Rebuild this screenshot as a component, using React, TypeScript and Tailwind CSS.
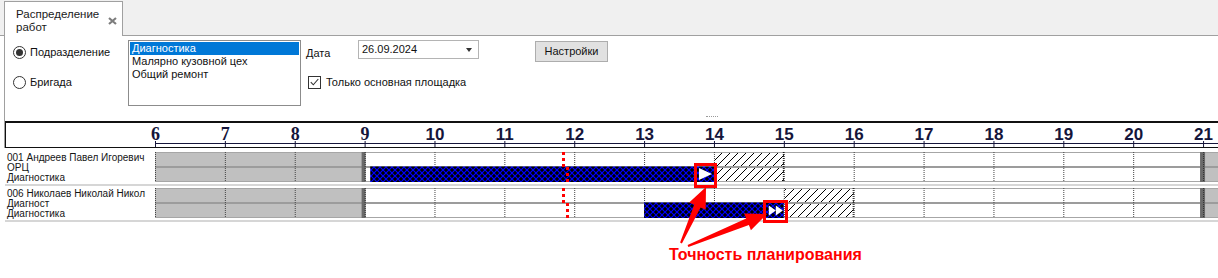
import React from "react";

const HOUR_W = 69.87;
const CHART_W = 1063;
const hx = (h: number) => (h - 6) * HOUR_W;
const HOURS = [6, 7, 8, 9, 10, 11, 12, 13, 14, 15, 16, 17, 18, 19, 20, 21];

interface GanttRow {
  lines: string[];
  barFrom: number;
  barTo: number;
  hatch: [number, number];
  marker: "single" | "double";
}

const rows: GanttRow[] = [
  {
    lines: ["001 Андреев Павел Игоревич", "ОРЦ", "Диагностика"],
    barFrom: 9.08,
    barTo: 14,
    hatch: [14, 15],
    marker: "single",
  },
  {
    lines: ["006 Николаев Николай Никол", "Диагност", "Диагностика"],
    barFrom: 13,
    barTo: 15,
    hatch: [15, 16],
    marker: "double",
  },
];

// tapered annotation arrow, tail -> tip
function arrow(x1: number, y1: number, x2: number, y2: number) {
  const tailW = 2, neckW = 7, headW = 18, headL = 21;
  const dx = x2 - x1, dy = y2 - y1;
  const len = Math.hypot(dx, dy);
  const ux = dx / len, uy = dy / len;
  const px = -uy, py = ux;
  const bx = x2 - ux * headL, by = y2 - uy * headL;
  const p = (x: number, y: number) => `${x.toFixed(1)},${y.toFixed(1)}`;
  return [
    p(x1 + (px * tailW) / 2, y1 + (py * tailW) / 2),
    p(bx + (px * neckW) / 2, by + (py * neckW) / 2),
    p(bx + (px * headW) / 2, by + (py * headW) / 2),
    p(x2, y2),
    p(bx - (px * headW) / 2, by - (py * headW) / 2),
    p(bx - (px * neckW) / 2, by - (py * neckW) / 2),
    p(x1 - (px * tailW) / 2, y1 - (py * tailW) / 2),
  ].join(" ");
}

function Radio({ label, checked }: { label: string; checked?: boolean }) {
  return (
    <div className="flex items-center h-[14px] gap-[4px]">
      <span className="w-[13px] h-[13px] rounded-full border border-[#333] bg-white flex items-center justify-center">
        {checked && <span className="w-[7px] h-[7px] rounded-full bg-[#333]" />}
      </span>
      <span>{label}</span>
    </div>
  );
}

function TimeScale() {
  return (
    <svg width={CHART_W} height={24} className="overflow-visible block">
      <line x1={0} y1={20.5} x2={CHART_W} y2={20.5} stroke="#15153a" strokeWidth={1} />
      {HOURS.map((h) => (
        <g key={h}>
          <line x1={hx(h) + 0.5} y1={18} x2={hx(h) + 0.5} y2={24} stroke="#15153a" strokeWidth={1} />
          <text
            x={hx(h) + 0.5}
            y={17}
            textAnchor="middle"
            fill="#15153a"
            fontWeight={700}
            fontSize={h < 10 ? 18 : 17}
            fontFamily={h < 10 ? "'Liberation Serif', serif" : "'Liberation Sans', sans-serif"}
          >
            {h}
          </text>
        </g>
      ))}
    </svg>
  );
}

function RowChart({ row, idx }: { row: GanttRow; idx: number }) {
  const cross = `cross-${idx}`;
  const hatch = `hatch-${idx}`;
  const bx = hx(row.barFrom);
  const ex = hx(row.barTo);
  return (
    <svg width={CHART_W} height={30} className="block">
      <defs>
        <pattern id={cross} width={6} height={6} patternUnits="userSpaceOnUse">
          <rect width={6} height={6} fill="#000" />
          <path d="M0 0L6 6M0 6L6 0" stroke="#0000ff" strokeWidth={1.2} />
        </pattern>
        <pattern id={hatch} width={8} height={8} patternUnits="userSpaceOnUse">
          <rect width={8} height={8} fill="#fff" />
          <path d="M0 8L8 0M-1 1L1 -1M7 9L9 7" stroke="#000" strokeWidth={1} />
        </pattern>
      </defs>

      {/* non-working time */}
      <rect x={0} y={0} width={hx(9)} height={30} fill="#c0c0c0" />
      <rect x={hx(21)} y={0} width={CHART_W - hx(21)} height={30} fill="#c0c0c0" />

      {/* planned slack */}
      <rect x={hx(row.hatch[0])} y={0} width={hx(row.hatch[1]) - hx(row.hatch[0])} height={30} fill={`url(#${hatch})`} />

      {/* grid lines */}
      <line x1={0} y1={0.5} x2={CHART_W} y2={0.5} stroke="#a6a6a6" />
      <line x1={0} y1={15} x2={CHART_W} y2={15} stroke="#9c9c9c" strokeWidth={2} />
      <line x1={0} y1={29.5} x2={CHART_W} y2={29.5} stroke="#a6a6a6" />
      {HOURS.map((h) => (
        <line key={h} x1={hx(h) + 0.5} y1={0} x2={hx(h) + 0.5} y2={30} stroke="#444" strokeDasharray="1 1" />
      ))}
      <line x1={hx(row.hatch[1]) - 0.5} y1={0} x2={hx(row.hatch[1]) - 0.5} y2={30} stroke="#000" strokeDasharray="1 1" />

      {/* shift boundaries */}
      <rect x={hx(9) - 3} y={0} width={4} height={30} fill="#6a6a6a" />
      <rect x={hx(21) - 3} y={0} width={5} height={30} fill="#6a6a6a" />
      <line x1={hx(9) + 0.5} y1={0} x2={hx(9) + 0.5} y2={30} stroke="#333" strokeDasharray="1 1" />
      <line x1={hx(21) + 0.5} y1={0} x2={hx(21) + 0.5} y2={30} stroke="#333" strokeDasharray="1 1" />

      {/* task */}
      <rect x={bx} y={14.5} width={ex - bx} height={15.5} fill={`url(#${cross})`} />
      {row.marker === "single" ? (
        <polygon points={`${ex - 15},16 ${ex - 2},22 ${ex - 15},28`} fill="#fff" />
      ) : (
        <g fill="#fff">
          <polygon points={`${ex - 15},17.5 ${ex - 8},22.5 ${ex - 15},27.5`} />
          <polygon points={`${ex - 8},17.5 ${ex - 1},22.5 ${ex - 8},27.5`} />
        </g>
      )}

      {/* current time */}
      <line x1={408.5} y1={0} x2={408.5} y2={15} stroke="#ff0000" strokeWidth={3} strokeDasharray="3 3" />
      <line x1={412.5} y1={15} x2={412.5} y2={30} stroke="#ff0000" strokeWidth={3} strokeDasharray="3 3" />
    </svg>
  );
}

export default function App() {
  return (
    <div className="relative w-[1218px] h-[278px] overflow-hidden bg-white text-[11px] text-[#111] font-['Liberation_Sans',Arial,sans-serif]">
      {/* Tab strip */}
      <div className="h-[36px] bg-[#f0f0f0] border-b border-[#a0a0a0] flex items-end">
        <div className="ml-[4px] w-[119px] h-[35px] -mb-px bg-white border border-b-0 border-[#a0a0a0] flex items-start pt-[6px] pl-[11px]">
          <div className="leading-[13px] text-[#1a1a1a] w-[88px] text-[11.5px]">
            Распределение
            <br />
            работ
          </div>
          <svg width={9} height={8} className="mt-[9px] ml-[4px]">
            <path d="M1 1L8 7M8 1L1 7" stroke="#7d7d7d" strokeWidth={2.2} />
          </svg>
        </div>
      </div>

      {/* Filters + timescale */}
      <div className="ml-[4px] border-l border-[#a0a0a0]">
        <div className="h-[80px] flex pt-[4px]">
          <div className="w-[123px] pl-[8px] pt-[5px] flex flex-col gap-[16px]">
            <Radio label="Подразделение" checked />
            <Radio label="Бригада" />
          </div>

          <div className="w-[173px] h-[66px] border border-[#8c8c8c] p-px leading-[13px]">
            <div className="bg-[#0078d7] text-white pl-[2px] h-[13px]">Диагностика</div>
            <div className="pl-[2px]">Малярно кузовной цех</div>
            <div className="pl-[2px]">Общий ремонт</div>
          </div>

          <div className="ml-[5px] flex flex-col">
            <div className="flex items-start h-[19px]">
              <span className="w-[52px] pt-[5px]">Дата</span>
              <div className="w-[121px] h-[19px] border border-[#b4b4b4] flex items-center justify-between pl-[3px] pr-[6px]">
                <span>26.09.2024</span>
                <span className="w-0 h-0 border-l-[3px] border-r-[3px] border-t-[4px] border-l-transparent border-r-transparent border-t-[#333]" />
              </div>
              <div className="ml-[56px] mt-[1px] w-[73px] h-[21px] bg-[#e1e1e1] border border-[#adadad] flex items-center justify-center">
                Настройки
              </div>
            </div>
            <div className="mt-[15px] ml-[2px] flex items-center gap-[5px]">
              <span className="w-[13px] h-[13px] border border-[#333] bg-white flex items-center justify-center">
                <svg width={9} height={8}>
                  <path d="M0.8 4.2L3.3 6.8L8.3 1" fill="none" stroke="#333" strokeWidth={1.1} />
                </svg>
              </span>
              <span>Только основная площадка</span>
            </div>
          </div>
        </div>

        <div className="h-[5px]">
          <div className="ml-[701px] w-[12px] border-t border-dotted border-[#9a9a9a]" />
        </div>

        <div className="h-[27px] border-t-2 border-b border-l border-[#111] flex">
          <div className="w-[149px] shrink-0" />
          <TimeScale />
        </div>
      </div>

      {/* Rows */}
      <div className="pl-[5px] pt-[4px]">
        {rows.map((row, i) => (
          <div key={i}>
            <div className="flex h-[30px]">
              <div className="w-[150px] shrink-0 pl-[2px] pt-px text-[10px] leading-[10px] text-[#151515] whitespace-nowrap">
                {row.lines.map((l) => (
                  <div key={l}>{l}</div>
                ))}
              </div>
              <RowChart row={row} idx={i} />
            </div>
            {i === 0 ? (
              <div className="h-[6px] flex items-center">
                <div className="h-[2px] w-full bg-[#d6d6d6]" />
              </div>
            ) : (
              <div className="h-[2px] mt-[2px] bg-[#d6d6d6]" />
            )}
          </div>
        ))}
      </div>

      <div className="ml-[669px] mt-[24px] text-[16px] leading-[18px] font-bold text-[#ff0000]">Точность планирования</div>

      {/* Annotation overlay */}
      <svg className="absolute inset-0 pointer-events-none" width={1218} height={278}>
        <rect x={695.5} y={164.5} width={20} height={22} fill="none" stroke="#ff0000" strokeWidth={3} />
        <rect x={764.5} y={201.5} width={22} height={20} fill="none" stroke="#ff0000" strokeWidth={3} />
        <polygon points={arrow(681, 243, 706, 187)} fill="#ff0000" />
        <polygon points={arrow(688, 246, 767, 214)} fill="#ff0000" />
      </svg>
    </div>
  );
}
